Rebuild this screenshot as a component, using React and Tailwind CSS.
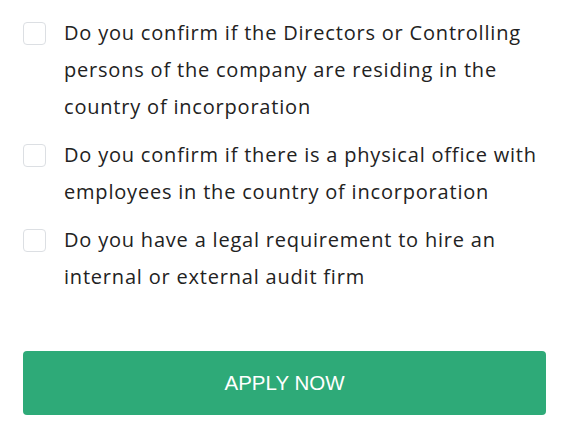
const questions = [
  "Do you confirm if the Directors or Controlling persons of the company are residing in the country of incorporation",
  "Do you confirm if there is a physical office with employees in the country of incorporation",
  "Do you have a legal requirement to hire an internal or external audit firm",
];

export default function App() {
  return (
    <div className="w-[585px] h-[437px] bg-white pl-[23px] pr-[39px] pt-[14px]">
      <ul className="flex flex-col gap-[11px]">
        {questions.map((q) => (
          <li key={q} className="flex items-start">
            <span className="mt-[8px] h-[23px] w-[23px] shrink-0 rounded-[4px] border border-[#dcdfe3] bg-white" />
            <span
              className="ml-[18px] text-[20px] leading-[37px] tracking-[0.8px] text-[#222]"
              style={{ fontFamily: '"Open Sans", sans-serif' }}
            >
              {q}
            </span>
          </li>
        ))}
      </ul>
      <button
        className="mt-[56px] flex h-[64px] w-full items-center justify-center rounded-[4px] bg-[#2eaa78] text-[20.5px] text-white"
        style={{ fontFamily: '"Liberation Sans", Arial, sans-serif' }}
      >
        APPLY NOW
      </button>
    </div>
  );
}
